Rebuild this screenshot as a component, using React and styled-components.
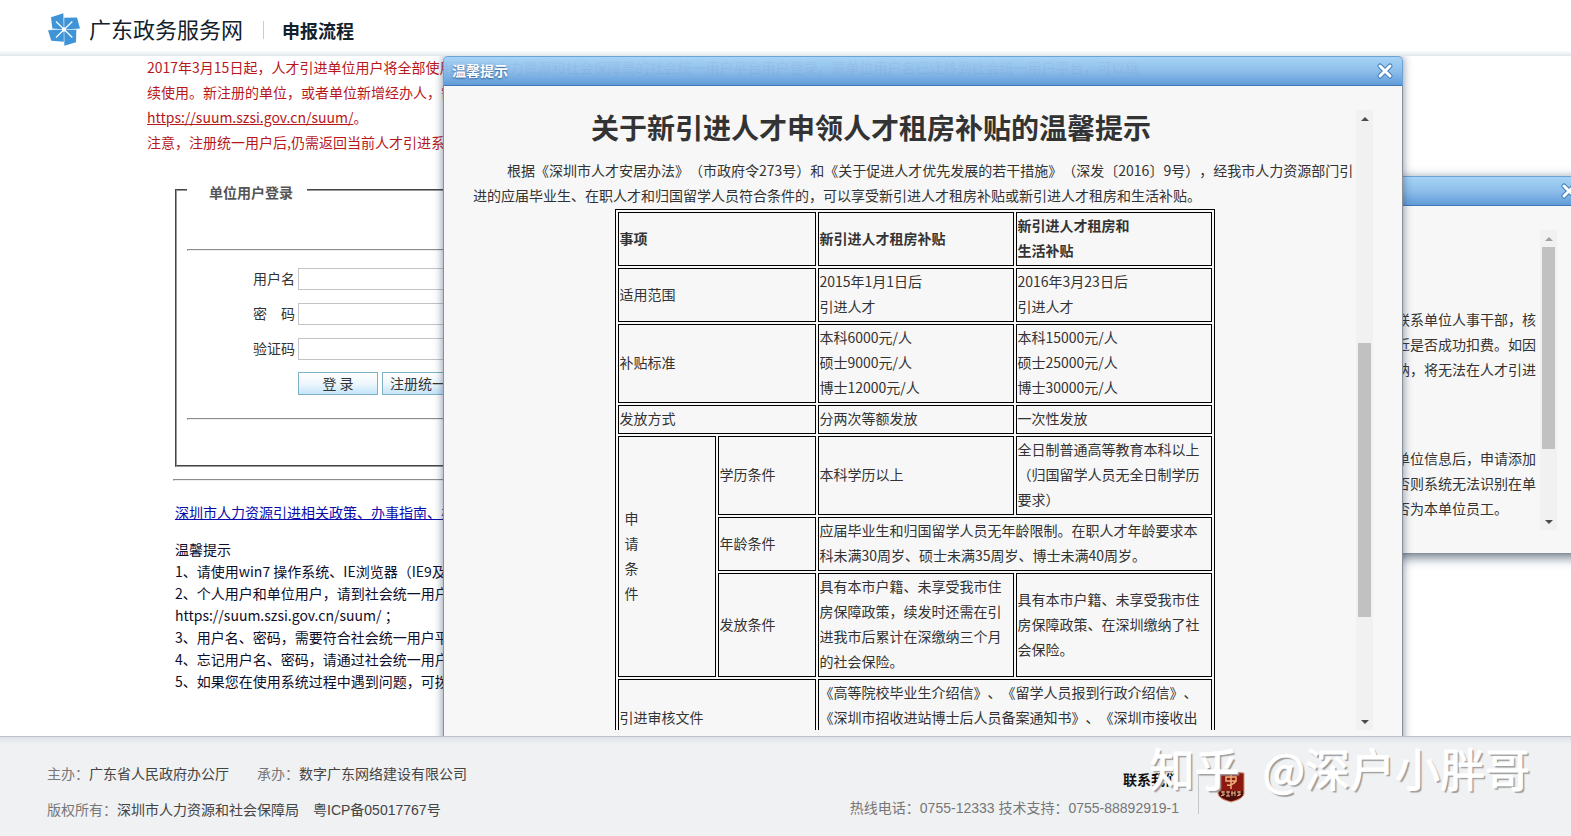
import React from "react";
import styled, { createGlobalStyle, css } from "styled-components";

const arial = '"Liberation Sans", "Noto Sans CJK SC", sans-serif';

const GlobalStyle = createGlobalStyle`
  *, *::before, *::after { box-sizing: border-box; }
  body {
    margin: 0;
    background: #fff;
    color: #333;
    font: 14px/25px "Noto Sans CJK SC", sans-serif;
    text-spacing-trim: space-all;
  }
  p, h1, h2, ol { margin: 0; padding: 0; font-weight: inherit; }
`;

const Page = styled.div`
  display: flex;
  flex-direction: column;
  height: 100vh;
  overflow: hidden;
`;

/* Header */
const Header = styled.header`
  display: flex;
  align-items: center;
  flex: none;
  height: 56px;
  padding: 4px 48px 0;
  background: linear-gradient(#fff 50px, #e6ecf0);
  border-bottom: 1px solid #e3e8ec;
  color: #13212c;
`;
const Brand = styled.a`
  display: flex;
  align-items: center;
  gap: 9px;
  color: inherit;
  text-decoration: none;
  font-size: 22px;
  line-height: 32px;
  span { padding-bottom: 4px; line-height: 28px; }
`;
const Section = styled.h1`
  margin-left: 20px;
  padding-left: 18px;
  border-left: 1px solid #ccc;
  font-size: 18px;
  font-weight: 700;
  line-height: 18px;
`;

/* Login page */
const Main = styled.main`
  position: relative;
  flex: 1;
  min-height: 0;
  overflow: hidden;
`;
const Content = styled.div`
  width: 64%;
  min-width: 1000px;
  margin-left: 147px;
`;
const Notice = styled.div`
  margin-top: -1px;
  color: #b8181c;
  white-space: nowrap;
  a { color: inherit; }
`;
const Panel = styled.div`
  margin-top: 22px;
  padding-left: 26px;
`;
const Rule = styled.hr`
  height: 2px;
  margin: ${(p) => p.$space || "0"};
  border: 1px solid #8c8c8c;
  border-right-color: #eee;
  border-bottom-color: #eee;
`;
const LoginBox = styled.fieldset`
  margin: 0 0 0 2px;
  padding: 0 10px;
  border: 2px groove #999;
`;
const Legend = styled.legend`
  padding: 5px 14px 1px 22px;
  color: #555;
  font-weight: 700;
  line-height: 20px;
`;
const Fields = styled.div`
  display: flex;
  flex-direction: column;
  gap: 13px;
  padding-left: 66px;
`;
const Field = styled.label`
  display: grid;
  grid-template-columns: 42px 220px;
  gap: 3px;
  line-height: 20px;
`;
const Input = styled.input`
  height: 22px;
  border: 1px solid #c4c4c8;
  font: inherit;
`;
const Actions = styled.div`
  display: flex;
  gap: 4px;
  margin: 12px 0 23px;
  padding-left: 111px;
`;
const Button = styled.button`
  min-width: 80px;
  height: 23px;
  padding: 0 7px;
  border: 1px solid #7eb1c6;
  background: linear-gradient(#fff, #eef7fd 50%, #c5e4f9);
  color: #333;
  font: inherit;
  line-height: 21px;
`;
const GuideLink = styled.a`
  display: inline-block;
  margin-left: 2px;
  color: #0b0bab;
`;
const Tips = styled.section`
  margin: 13px 0 0 2px;
  color: #0d0d2b;
  line-height: 22px;
  white-space: nowrap;
`;

/* Dialogs */
const Dialog = styled.section`
  position: absolute;
  display: flex;
  flex-direction: column;
  border-radius: 5px 5px 0 0;
  box-shadow: 0 0 10px rgba(40, 65, 100, 0.6);
  ${(p) =>
    p.$front
      ? css`top: 0; left: 443px; width: 960px; height: 720px;`
      : css`top: 120px; right: -16px; width: 487px; height: 378px; box-shadow: 0 3px 12px rgba(40, 65, 85, 0.75);`}
`;
const TitleBar = styled.header`
  display: flex;
  align-items: center;
  justify-content: space-between;
  flex: none;
  height: 30px;
  padding: 0 8px 1px;
  border: 1px solid #6ba3d5;
  border-bottom-color: #3f76b5;
  border-radius: 5px 5px 0 0;
  background: linear-gradient(
    rgba(163, 210, 246, 0.96),
    rgba(137, 187, 233, 0.96) 50%,
    rgba(90, 152, 215, 0.96)
  );
  h2 {
    color: #fff;
    font-size: 14px;
    font-weight: 700;
    text-shadow: 0 1px 2px #2a5a92;
  }
`;
const CloseButton = styled.button`
  display: flex;
  padding: 0;
  border: 0;
  background: none;
`;
const DialogBody = styled.div`
  display: flex;
  flex: 1;
  min-height: 0;
  padding: 24px 29px;
  border: 1px solid #8b8f96;
  border-top: 0;
  background: #f7f7f7;
`;
const Scroller = styled.div`
  flex: 1;
  min-width: 0;
  height: ${(p) => p.$height};
  overflow: hidden;
  p { white-space: nowrap; }
`;
const Track = styled.div`
  display: flex;
  flex-direction: column;
  align-items: center;
  flex: none;
  width: 17px;
  height: ${(p) => p.$height};
  background: #f1f1f1;
`;
const Arrow = styled.span`
  display: flex;
  align-items: center;
  justify-content: center;
  flex: none;
  height: 17px;
  color: ${(p) => (p.$dim ? "#a0a0a0" : "#4b4b4b")};
`;
const Rail = styled.div`
  flex: 1;
  padding-top: ${(p) => p.$offset};
`;
const Thumb = styled.div`
  width: 13px;
  height: ${(p) => p.$size};
  background: #c1c1c1;
`;

const Headline = styled.h2`
  margin-bottom: 14px;
  padding-right: 87px;
  font-size: 28px;
  font-weight: 700;
  line-height: 34px;
  text-align: center;
`;
const Intro = styled.p`
  margin-bottom: 1px;
  text-indent: 34px;
`;
const Grid = styled.table`
  width: 600px;
  margin: 0 auto;
  border: 1px solid #000;
  border-spacing: 2px;
  table-layout: fixed;
  th, td {
    padding: 0 1px 2px;
    border: 1px solid #000;
    text-align: left;
    vertical-align: middle;
    font-weight: 400;
  }
  thead th { font-weight: 700; }
`;
const Col = styled.col`
  width: ${(p) => p.$width};
`;
const Vertical = styled.span`
  display: block;
  width: 14px;
  margin-left: 5px;
`;
const Reminder = styled.div`
  padding-top: 38px;
  p { margin-top: 39px; text-indent: 2em; }
`;

/* Footer */
const Footer = styled.footer`
  display: flex;
  flex: none;
  height: 100px;
  padding: 19px 48px 0 47px;
  border-top: 1px solid #bcc1ca;
  background: linear-gradient(#dfe3e8, #eff1f3 7px);
  color: #777;
  font-family: ${arial};
  b { color: #444; font-weight: 400; }
`;
const Credits = styled.div`
  flex: 1;
  line-height: 36px;
`;
const CreditRow = styled.div`
  display: flex;
  gap: ${(p) => p.$gap};
`;
const Contact = styled.div`
  padding-top: 10px;
  line-height: 28px;
  text-align: right;
  strong { display: block; color: #111; }
`;
const Badge = styled.div`
  width: 325px;
  height: 40px;
  margin: 18px 0 0 19px;
  padding-left: 18px;
  border-left: 1px solid #c5c7cb;
  svg { display: block; margin-top: -3px; }
`;
const Watermark = styled.div`
  position: absolute;
  right: 41px;
  bottom: 36px;
  display: flex;
  gap: 23px;
  color: #fff;
  font-size: 45px;
  line-height: 64px;
  text-shadow: 2px 2px 1px #9d9d9d;
  -webkit-text-stroke: 1px #fff;
`;

const Logo = () => (
  <svg width="32" height="33" viewBox="0 0 96 98" aria-hidden="true">
    <g fill="#3f94d8">
      <path d="M9 12 46 0 48 49 13 46Z" />
      <path d="M48 14 87 13 96 46 48 49Z" />
      <path d="M0 51 48 49V86L10 83Z" />
      <path d="M48 49 85 50 84 87 49 98Z" />
    </g>
    <path d="M48 12V88M8 49H88" stroke="#b9dcf5" strokeWidth="2" />
    <path d="M24 25 73 73M73 25 24 73" stroke="#f2f9ff" strokeWidth="4" />
    <rect x="42" y="43" width="12" height="12" rx="3" fill="#fff" />
  </svg>
);

const CloseIcon = () => (
  <svg width="18" height="18" viewBox="0 0 18 18" aria-hidden="true">
    <path d="M4 4 14 14M14 4 4 14" stroke="#3f7fc0" strokeWidth="5" strokeLinecap="round" />
    <path d="M4 4 14 14M14 4 4 14" stroke="#fff" strokeWidth="3" strokeLinecap="round" />
  </svg>
);

const Shield = () => (
  <svg width="28" height="32" viewBox="0 0 28 32" aria-hidden="true">
    <path d="M1 2Q14 0 27 2V23Q26 28 14 31 2 28 1 23Z" fill="#8d1711" stroke="#d39a72" />
    <path d="M2 20H26V23Q25 27 14 30 3 27 2 23Z" fill="#4e0f0c" />
    <path d="M9 6H19V10H9ZM14 3V18M10 14Q15 15 19 10" fill="none" stroke="#efb37d" strokeWidth="1.5" />
    <path d="M4 21H8M6 20V25M4 25 8 23M9 21H13M11 20V25M9 25H13M15 20V25M14 22H18M18 20V25M20 21H24M22 20V25M20 25 24 23" fill="none" stroke="#e8b98f" />
  </svg>
);

function ScrollBar({ height, offset, size, atTop }) {
  return (
    <Track $height={height} aria-hidden="true">
      <Arrow $dim={atTop}>
        <svg width="8" height="4"><path d="M4 0 8 4H0Z" fill="currentColor" /></svg>
      </Arrow>
      <Rail $offset={offset}><Thumb $size={size} /></Rail>
      <Arrow>
        <svg width="8" height="4"><path d="M0 0H8L4 4Z" fill="currentColor" /></svg>
      </Arrow>
    </Track>
  );
}

function Popup({ front, height, offset, size, atTop, children }) {
  return (
    <Dialog $front={front} role="dialog" aria-label="温馨提示">
      <TitleBar>
        <h2>温馨提示</h2>
        <CloseButton type="button" aria-label="关闭"><CloseIcon /></CloseButton>
      </TitleBar>
      <DialogBody>
        <Scroller $height={height}>{children}</Scroller>
        <ScrollBar height={height} offset={offset} size={size} atTop={atTop} />
      </DialogBody>
    </Dialog>
  );
}

const SubsidyTable = () => (
  <Grid>
    <colgroup>
      <Col $width="98px" /><Col $width="98px" /><Col $width="196px" /><Col $width="196px" />
    </colgroup>
    <thead>
      <tr>
        <th colSpan={2}>事项</th>
        <th>新引进人才租房补贴</th>
        <th>新引进人才租房和<br />生活补贴</th>
      </tr>
    </thead>
    <tbody>
      <tr>
        <th colSpan={2}>适用范围</th>
        <td>2015年1月1日后<br />引进人才</td>
        <td>2016年3月23日后<br />引进人才</td>
      </tr>
      <tr>
        <th colSpan={2}>补贴标准</th>
        <td>本科6000元/人<br />硕士9000元/人<br />博士12000元/人</td>
        <td>本科15000元/人<br />硕士25000元/人<br />博士30000元/人</td>
      </tr>
      <tr>
        <th colSpan={2}>发放方式</th>
        <td>分两次等额发放</td>
        <td>一次性发放</td>
      </tr>
      <tr>
        <th rowSpan={3}><Vertical>申请条件</Vertical></th>
        <th>学历条件</th>
        <td>本科学历以上</td>
        <td>全日制普通高等教育本科以上（归国留学人员无全日制学历要求）</td>
      </tr>
      <tr>
        <th>年龄条件</th>
        <td colSpan={2}>应届毕业生和归国留学人员无年龄限制。在职人才年龄要求本科未满30周岁、硕士未满35周岁、博士未满40周岁。</td>
      </tr>
      <tr>
        <th>发放条件</th>
        <td>具有本市户籍、未享受我市住房保障政策，续发时还需在引进我市后累计在深缴纳三个月的社会保险。</td>
        <td>具有本市户籍、未享受我市住房保障政策、在深圳缴纳了社会保险。</td>
      </tr>
      <tr>
        <th colSpan={2}>引进审核文件</th>
        <td colSpan={2}>
          《高等院校毕业生介绍信》、《留学人员报到行政介绍信》、<br />
          《深圳市招收进站博士后人员备案通知书》、《深圳市接收出<br />
          站博士后人员介绍信》等
        </td>
      </tr>
    </tbody>
  </Grid>
);

export default function App() {
  return (
    <Page>
      <GlobalStyle />
      <Header>
        <Brand href="#"><Logo /><span>广东政务服务网</span></Brand>
        <Section>申报流程</Section>
      </Header>

      <Main>
        <Content>
          <Notice>
            2017年3月15日起，人才引进单位用户将全部使用深圳市人力资源和社会保障局的社会统一用户平台用户登录，原单位用户名已迁移到社会统一用户平台，可以继<br />
            续使用。新注册的单位，或者单位新增经办人，需到社会统一用户平台注册，网址：<br />
            <a href="#suum">https://suum.szsi.gov.cn/suum/</a>。<br />
            注意，注册统一用户后,仍需返回当前人才引进系统登录。
          </Notice>
          <Panel>
            <LoginBox>
              <Legend>单位用户登录</Legend>
              <Rule $space="46px 0 17px" />
              <Fields>
                <Field>用户名<Input type="text" /></Field>
                <Field>密　码<Input type="password" /></Field>
                <Field>验证码<Input type="text" /></Field>
              </Fields>
              <Actions>
                <Button type="button">登 录</Button>
                <Button type="button">注册统一用户</Button>
              </Actions>
              <Rule $space="0 0 45px" />
            </LoginBox>
            <Rule $space="12px 0 19px" />
            <GuideLink href="#guide">深圳市人力资源引进相关政策、办事指南、办理流程</GuideLink>
            <Tips>
              <p>温馨提示</p>
              <p>1、请使用win7 操作系统、IE浏览器（IE9及以上版本）</p>
              <p>2、个人用户和单位用户，请到社会统一用户平台注册</p>
              <p>https://suum.szsi.gov.cn/suum/ ；</p>
              <p>3、用户名、密码，需要符合社会统一用户平台要求</p>
              <p>4、忘记用户名、密码，请通过社会统一用户平台找回</p>
              <p>5、如果您在使用系统过程中遇到问题，可拨打电话咨询</p>
            </Tips>
          </Panel>
        </Content>

        <Popup height="300px" offset="0px" size="202px" atTop>
          <Reminder>
            <p>
              如本人已在深圳缴纳社会保险，请及时联系单位人事干部，核<br />
              实单位社会保险缴费情况及个人账户扣款最近是否成功扣费。如因<br />
              单位社会保险费未能按时扣缴或没有足额缴纳，将无法在人才引进<br />
              系统中办理业务。
            </p>
            <p>
              单位用户登录人才引进系统，请先完善单位信息后，申请添加<br />
              单位经办人以及在职员工的相关信息资料，否则系统无法识别在单<br />
              位参加社会保险的人员，也无法确认该人是否为本单位员工。
            </p>
          </Reminder>
        </Popup>

        <Popup front height="620px" offset="216px" size="274px">
          <Headline>关于新引进人才申领人才租房补贴的温馨提示</Headline>
          <Intro>
            根据《深圳市人才安居办法》（市政府令273号）和《关于促进人才优先发展的若干措施》（深发〔2016〕9号），经我市人力资源部门引<br />
            进的应届毕业生、在职人才和归国留学人员符合条件的，可以享受新引进人才租房补贴或新引进人才租房和生活补贴。
          </Intro>
          <SubsidyTable />
        </Popup>
      </Main>

      <Footer>
        <Credits>
          <CreditRow $gap="28px">
            <span>主办：<b>广东省人民政府办公厅</b></span>
            <span>承办：<b>数字广东网络建设有限公司</b></span>
          </CreditRow>
          <CreditRow $gap="14px">
            <span>版权所有：<b>深圳市人力资源和社会保障局</b></span>
            <b>粤ICP备05017767号</b>
          </CreditRow>
        </Credits>
        <Contact>
          <strong>联系我们</strong>
          热线电话：0755-12333 技术支持：0755-88892919-1
        </Contact>
        <Badge><Shield /></Badge>
      </Footer>
      <Watermark><span>知乎</span><span>@深户小胖哥</span></Watermark>
    </Page>
  );
}
